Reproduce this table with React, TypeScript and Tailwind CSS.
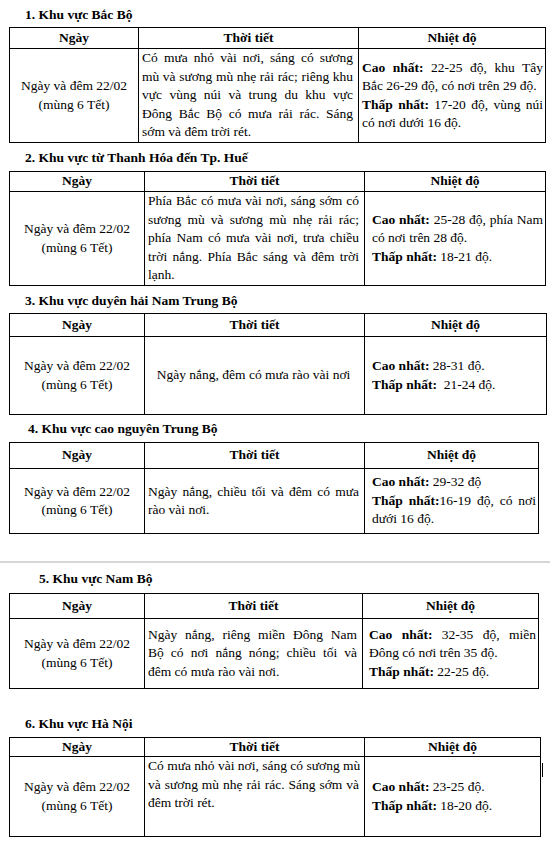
import React from 'react'

type Line = { b?: string; t: string; j?: boolean }
type Cell = { lines: Line[]; top?: boolean; center?: boolean }

type Region = {
  title: string
  titleBox: string
  tableBox: string
  cols: string
  head: string
  body: string
  tempPad: string
  day: Cell
  weather: Cell
  temp: Cell
}

const day: Cell = {
  center: true,
  lines: [{ t: 'Ngày và đêm 22/02' }, { t: '(mùng 6 Tết)' }],
}

const regions: Region[] = [
  {
    title: '1. Khu vực Bắc Bộ',
    titleBox: 'mt-[5px] pl-[25px]',
    tableBox: 'mt-[2px] w-[537px]',
    cols: 'grid-cols-[129px_220px_1fr]',
    head: 'h-[21px]',
    body: 'h-[93px]',
    tempPad: 'pl-[3px]',
    day,
    weather: {
      top: true,
      lines: [
        { t: 'Có mưa nhỏ vài nơi, sáng có sương', j: true },
        { t: 'mù và sương mù nhẹ rải rác; riêng khu', j: true },
        { t: 'vực vùng núi và trung du khu vực', j: true },
        { t: 'Đông Bắc Bộ có mưa rải rác. Sáng', j: true },
        { t: 'sớm và đêm trời rét.' },
      ],
    },
    temp: {
      lines: [
        { b: 'Cao nhất:', t: ' 22-25 độ, khu Tây', j: true },
        { t: 'Bắc 26-29 độ, có nơi trên 29 độ.' },
        { b: 'Thấp nhất:', t: ' 17-20 độ, vùng núi', j: true },
        { t: 'có nơi dưới 16 độ.' },
      ],
    },
  },
  {
    title: '2. Khu vực từ Thanh Hóa đến Tp. Huế',
    titleBox: 'mt-[5px] pl-[25px]',
    tableBox: 'mt-[3px] w-[537px]',
    cols: 'grid-cols-[135px_220px_1fr]',
    head: 'h-[20px]',
    body: 'h-[93px]',
    tempPad: 'pl-[7px]',
    day,
    weather: {
      top: true,
      lines: [
        { t: 'Phía Bắc có mưa vài nơi, sáng sớm có', j: true },
        { t: 'sương mù và sương mù nhẹ rải rác;', j: true },
        { t: 'phía Nam có mưa vài nơi, trưa chiều', j: true },
        { t: 'trời nắng. Phía Bắc sáng và đêm trời', j: true },
        { t: 'lạnh.' },
      ],
    },
    temp: {
      lines: [
        { b: 'Cao nhất:', t: ' 25-28 độ, phía Nam', j: true },
        { t: 'có nơi trên 28 độ.' },
        { b: 'Thấp nhất:', t: ' 18-21 độ.' },
      ],
    },
  },
  {
    title: '3. Khu vực duyên hải Nam Trung Bộ',
    titleBox: 'mt-[5px] pl-[25px]',
    tableBox: 'mt-[2px] w-[538px]',
    cols: 'grid-cols-[135px_220px_1fr]',
    head: 'h-[23px]',
    body: 'h-[77px]',
    tempPad: 'pl-[7px]',
    day,
    weather: {
      center: true,
      lines: [{ t: 'Ngày nắng, đêm có mưa rào vài nơi' }],
    },
    temp: {
      lines: [
        { b: 'Cao nhất:', t: ' 28-31 độ.' },
        { b: 'Thấp nhất:', t: '\u00a0 21-24 độ.' },
      ],
    },
  },
  {
    title: '4. Khu vực cao nguyên Trung Bộ',
    titleBox: 'mt-[4px] pl-[28px]',
    tableBox: 'mt-[3px] w-[530px]',
    cols: 'grid-cols-[135px_220px_1fr]',
    head: 'h-[26px]',
    body: 'h-[64px]',
    tempPad: 'pl-[7px]',
    day,
    weather: {
      lines: [
        { t: 'Ngày nắng, chiều tối và đêm có mưa', j: true },
        { t: 'rào vài nơi.' },
      ],
    },
    temp: {
      lines: [
        { b: 'Cao nhất:', t: ' 29-32 độ' },
        { b: 'Thấp nhất:', t: '16-19 độ, có nơi', j: true },
        { t: 'dưới 16 độ.' },
      ],
    },
  },
]

const south: Region[] = [
  {
    title: '5. Khu vực Nam Bộ',
    titleBox: 'mt-[6px] pl-[39px]',
    tableBox: 'mt-[4px] w-[530px]',
    cols: 'grid-cols-[135px_218px_1fr]',
    head: 'h-[25px]',
    body: 'h-[69px]',
    tempPad: 'pl-[6px]',
    day,
    weather: {
      lines: [
        { t: 'Ngày nắng, riêng miền Đông Nam', j: true },
        { t: 'Bộ có nơi nắng nóng; chiều tối và', j: true },
        { t: 'đêm có mưa rào vài nơi.' },
      ],
    },
    temp: {
      lines: [
        { b: 'Cao nhất:', t: ' 32-35 độ, miền', j: true },
        { t: 'Đông có nơi trên 35 độ.' },
        { b: 'Thấp nhất:', t: ' 22-25 độ.' },
      ],
    },
  },
  {
    title: '6. Khu vực Hà Nội',
    titleBox: 'mt-[25px] pl-[25px]',
    tableBox: 'mt-[3px] w-[532px]',
    cols: 'grid-cols-[135px_220px_1fr]',
    head: 'h-[19px]',
    body: 'h-[79px]',
    tempPad: 'pl-[7px]',
    day,
    weather: {
      top: true,
      lines: [
        { t: 'Có mưa nhỏ vài nơi, sáng có sương mù', j: true },
        { t: 'và sương mù nhẹ rải rác. Sáng sớm và', j: true },
        { t: 'đêm trời rét.' },
      ],
    },
    temp: {
      lines: [
        { b: 'Cao nhất:', t: ' 23-25 độ.' },
        { b: 'Thấp nhất:', t: ' 18-20 độ.' },
      ],
    },
  },
]

function LineView({ line }: { line: Line }) {
  return (
    <div
      className={
        line.j
          ? 'whitespace-nowrap text-justify [text-align-last:justify]'
          : 'whitespace-nowrap'
      }
    >
      {line.b && <b className="font-bold">{line.b}</b>}
      {line.t}
    </div>
  )
}

function CellView({ cell, pad, last }: { cell: Cell; pad: string; last?: boolean }) {
  return (
    <div
      className={
        'flex flex-col ' +
        (cell.top ? 'justify-start ' : 'justify-center ') +
        (cell.center ? 'items-center text-center ' : '') +
        (last ? '' : 'border-r border-black ') +
        pad
      }
    >
      {cell.lines.map((l, i) => (
        <LineView key={i} line={l} />
      ))}
    </div>
  )
}

function RegionTable({ r }: { r: Region }) {
  return (
    <section>
      <h2 className={'h-[20px] leading-[20px] text-[13.5px] font-bold ' + r.titleBox}>{r.title}</h2>
      <div className={'ml-[9px] border border-black ' + r.tableBox}>
        <div className={'grid border-b border-black font-bold ' + r.cols + ' ' + r.head}>
          <div className="flex items-center justify-center border-r border-black">Ngày</div>
          <div className="flex items-center justify-center border-r border-black">Thời tiết</div>
          <div className="flex items-center justify-center">Nhiệt độ</div>
        </div>
        <div className={'grid ' + r.cols + ' ' + r.body}>
          <CellView cell={r.day} pad="px-[2px]" />
          <CellView cell={r.weather} pad="pl-[3px] pr-[5px]" />
          <CellView cell={r.temp} pad={r.tempPad + ' pr-[2px]'} last />
        </div>
      </div>
    </section>
  )
}

export default function App() {
  return (
    <div className="relative w-[550px] h-[848px] overflow-hidden bg-white text-black font-['Liberation_Serif','Times_New_Roman',serif] text-[13.5px] leading-[18.5px]">
      {regions.map((r) => (
        <RegionTable key={r.title} r={r} />
      ))}

      <div className="mt-[27px] h-[2px] bg-[#d6d6d6]" />

      {south.map((r) => (
        <RegionTable key={r.title} r={r} />
      ))}

      {/* text cursor beside the last table */}
      <div className="absolute left-[542px] top-[763px] h-[14px] w-[1px] bg-black" />
    </div>
  )
}
